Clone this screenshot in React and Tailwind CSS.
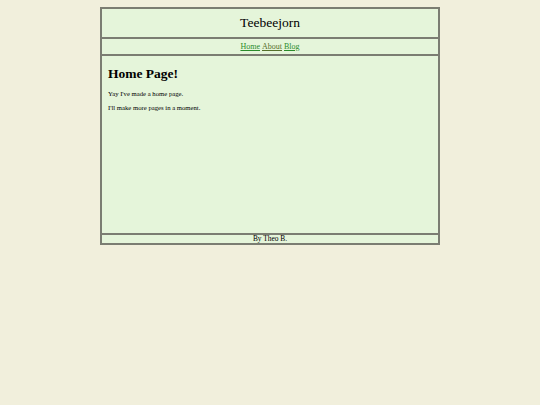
export default function App() {
  return (
    <div className="min-h-[405px] w-full bg-[#f1efdc] pt-[7px]" style={{ fontFamily: '"Liberation Serif", serif' }}>
      <div className="ml-[100px] flex w-[340px] flex-col border-2 border-[#7b7d72] bg-[#e5f5da] text-black">
        {/* Header */}
        <div className="flex h-[30px] items-center justify-center border-b-2 border-[#7b7d72] pt-[1px] text-[13.5px]">
          Teebeejorn
        </div>
        {/* Nav */}
        <div className="flex h-[17px] items-center justify-center gap-[2px] border-b-2 border-[#7b7d72] pt-[1px] text-[8px]">
          <a href="#" className="text-[#2a8c2a] underline">Home</a>
          <a href="#" className="text-[#55702a] underline">About</a>
          <a href="#" className="text-[#2a8c2a] underline">Blog</a>
        </div>
        {/* Main */}
        <div className="flex h-[177px] flex-col px-[6px] pt-[9px]">
          <h1 className="text-[13.5px] font-bold leading-[17px]">Home Page!</h1>
          <p className="mt-[7px] text-[6.7px] leading-[9px]">Yay I've made a home page.</p>
          <p className="mt-[5px] text-[6.7px] leading-[9px]">I'll make more pages in a moment.</p>
        </div>
        {/* Footer */}
        <div className="flex h-[10px] items-center justify-center border-t-2 border-[#7b7d72] text-[7.4px] leading-[8px]">
          By Theo B.
        </div>
      </div>
    </div>
  )
}
